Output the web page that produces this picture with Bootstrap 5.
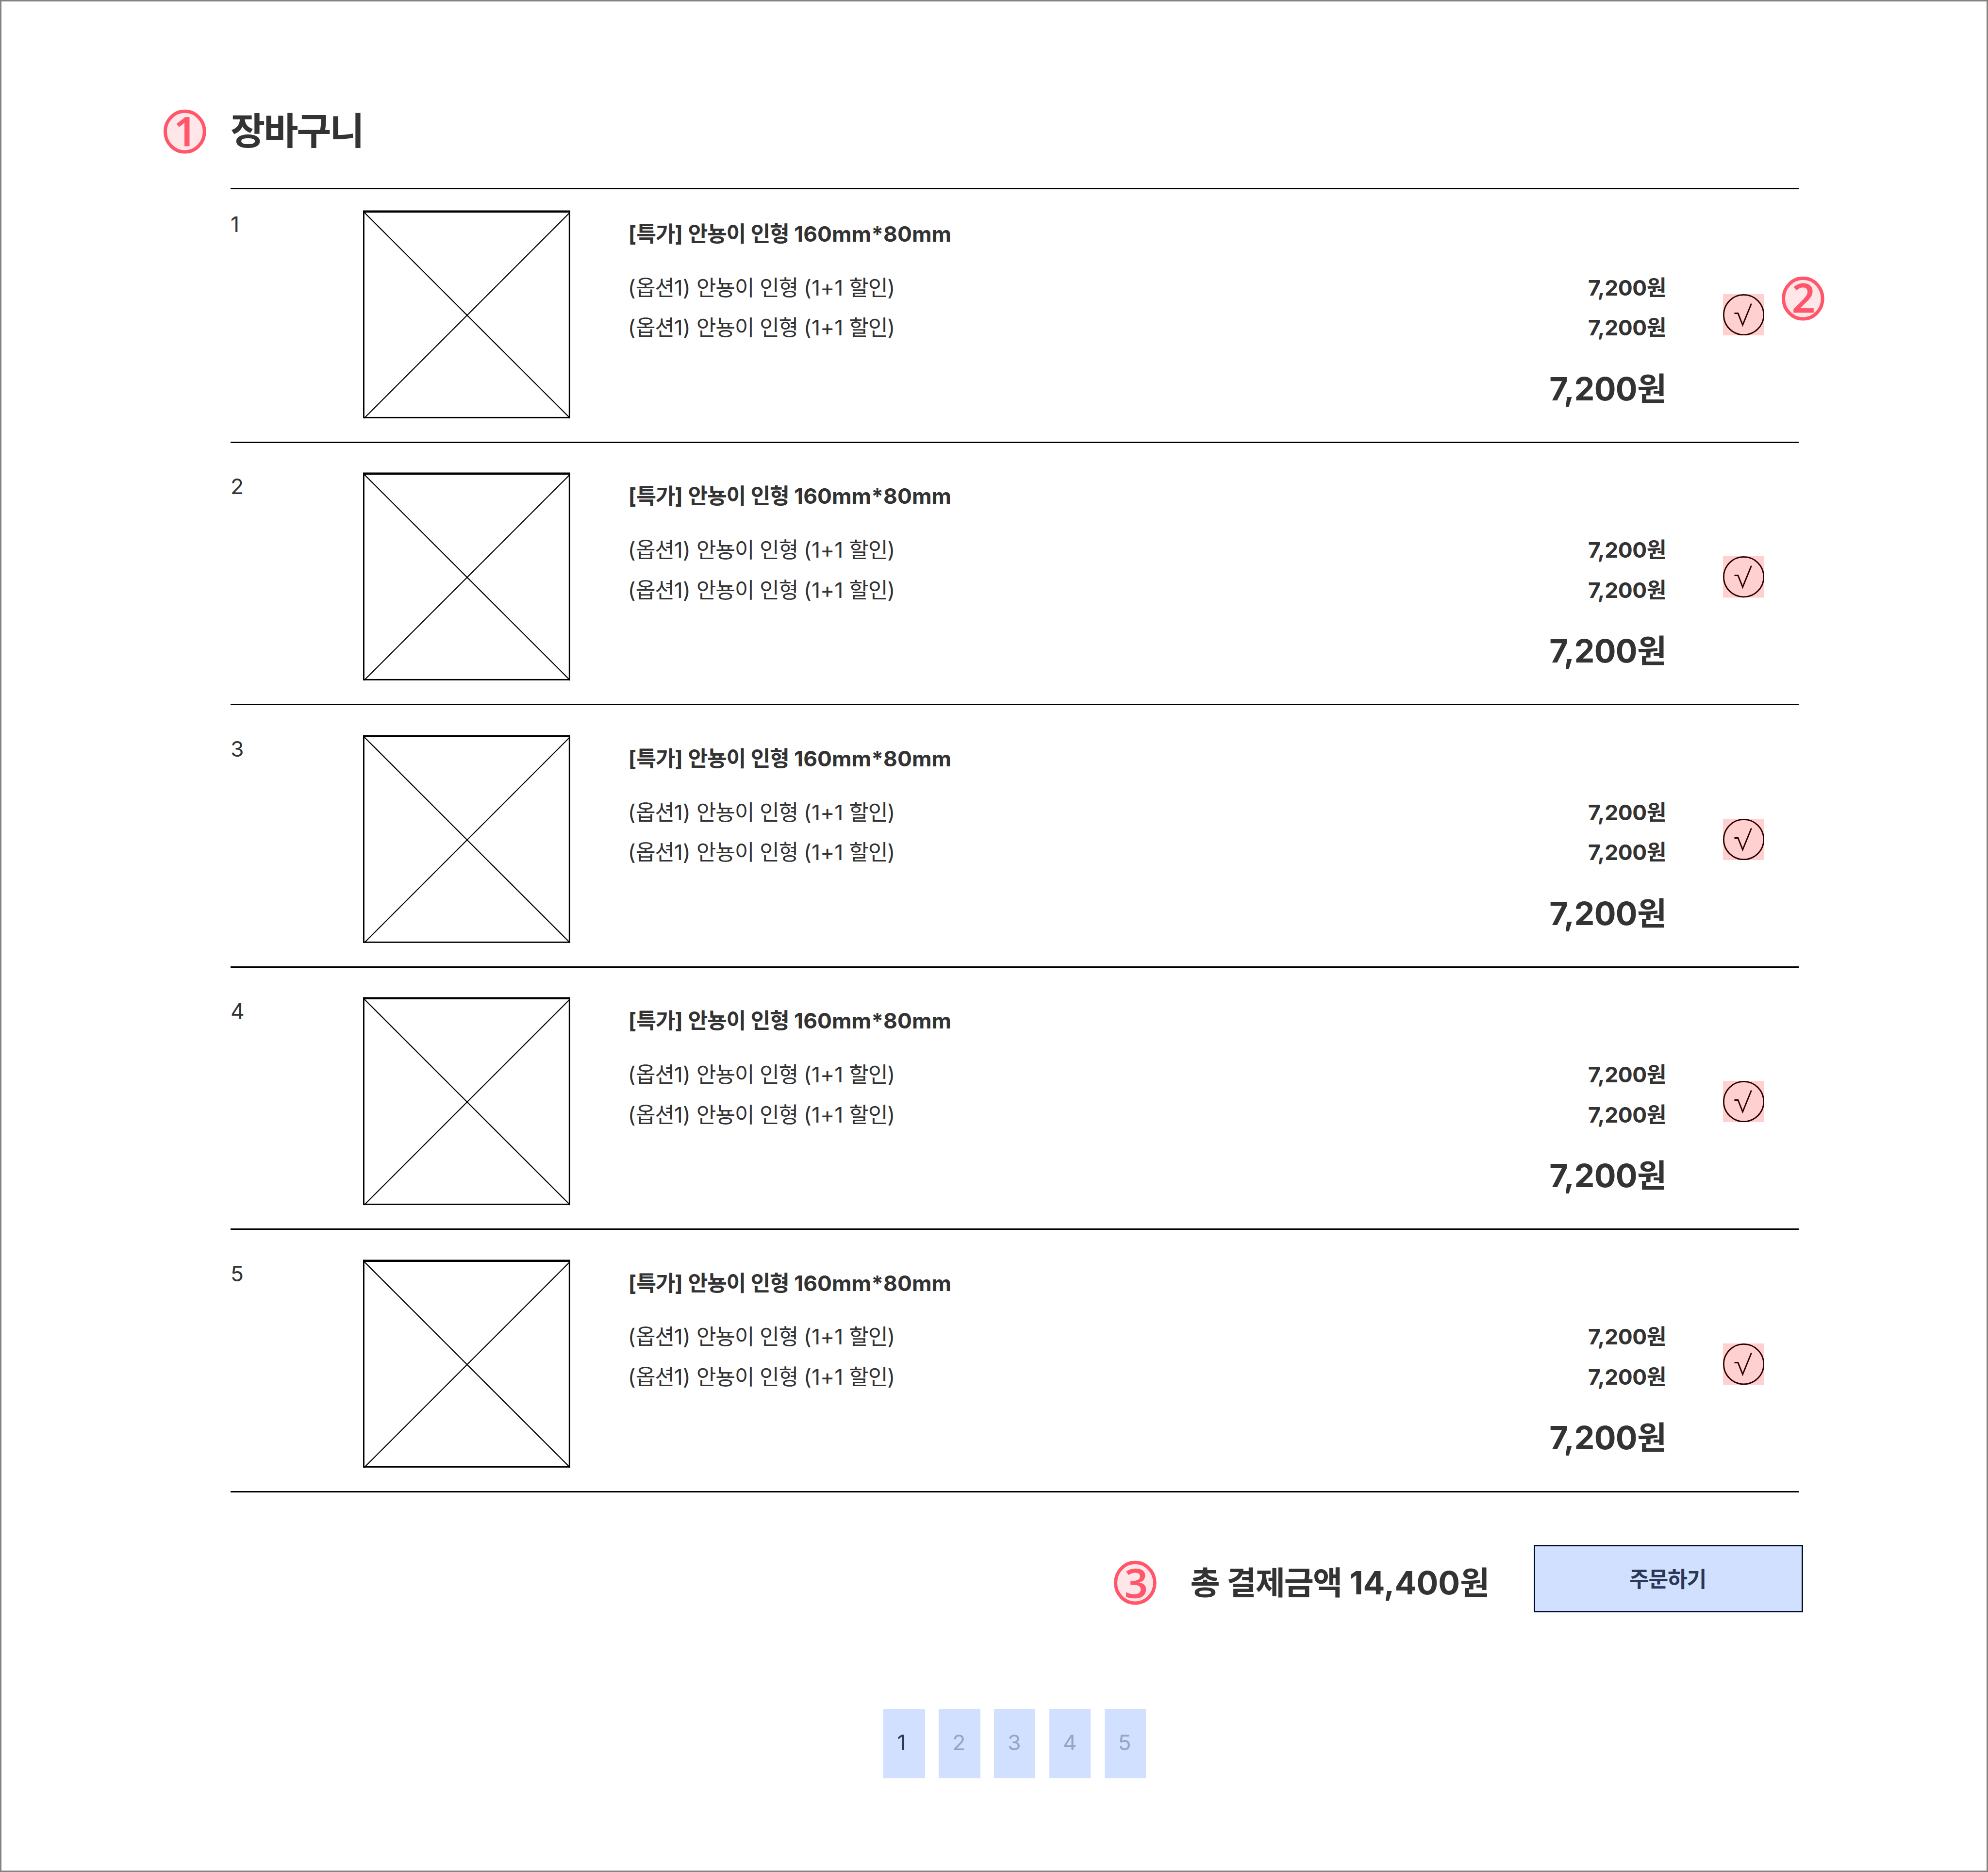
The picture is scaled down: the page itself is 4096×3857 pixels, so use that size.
<!DOCTYPE html>
<html lang="ko">
<head>
<meta charset="utf-8">
<meta name="viewport" content="width=device-width, initial-scale=1">
<title>장바구니</title>
<link href="https://cdn.jsdelivr.net/npm/bootstrap@5.3.0/dist/css/bootstrap.min.css" rel="stylesheet">
<style>
  html { font-size: 71.1111px; }
  body {
    margin: 0; background: #fff; color: #333; overflow: hidden;
    font-family: "Inter", "Noto Sans CJK KR", sans-serif;
    font-size: .624rem; line-height: .8rem;
  }
  .sheet { width: 57.6rem; height: 3857px; border: 3px solid #848280; }
  /* the 3px frame is taken off the paddings */
  .sheet-in { padding: calc(3.113rem - 3px) calc(5.48rem - 3px) 0 calc(6.68rem - 3px); }
  .ko { letter-spacing: -.03em; }
  .num { letter-spacing: -.01em; }
  .dim { letter-spacing: .002em; }
  .note-mark { display: block; width: 1.233rem; height: 1.27rem; flex: none; overflow: visible; }
  .note-mark ellipse { fill: #ffe6e9; stroke: #ff566a; stroke-width: 9.8; }
  .note-mark text { font: 600 118px "Open Sans", sans-serif; fill: #ff566a; stroke: #ff566a; stroke-width: 1; }

  .cart-head { margin-left: -1.936rem; gap: .703rem; padding-bottom: .927rem; }
  .cart-head .note-mark { margin-top: .07rem; }
  .cart-head h1 { font-size: 1.09rem; line-height: 1.4rem; }
  .cart-head .ko { letter-spacing: -.041em; }

  .cart-list { border-top: 3px solid #000; }
  .cart-item { height: 7.6rem; padding-top: .88rem; border-bottom: 3px solid #000; }
  .cart-item:first-child { height: calc(7.4rem - 3px); padding-top: calc(.68rem - 3px); }
  .item-no { width: 3.84rem; flex: none; margin-top: -.02rem; }
  .thumb { width: 6rem; height: 6.04rem; margin-top: -.03rem; flex: none; display: block; }
  .item-text { padding: .262rem 0 0 1.67rem; }
  .item-text .item-name { padding-left: .015rem; margin-bottom: .76rem; }
  .item-text .opt { margin-bottom: .36rem; word-spacing: -.015em; }
  .item-cost { padding-top: 1.822rem; margin-right: 1.655rem; }
  .item-cost .unit { margin-bottom: .36rem; }
  .item-cost .sum { font-size: .935rem; line-height: 1.2rem; margin-top: .767rem; }
  .pick { width: 1.2rem; height: 1.2rem; margin: 2.4rem 1rem 0 0; flex: none; }
  .pick > svg { display: block; width: 100%; height: 100%; }
  .pick .note-mark { position: absolute; left: 1.708rem; top: -.5rem; width: 1.233rem; height: 1.27rem; }

  .cart-foot { margin: 1.52rem -.12rem 0 0; padding-left: 25.587rem; }
  .cart-foot .note-mark { margin-top: .46rem; }
  .total { font-size: .935rem; line-height: 1.2rem; margin: .505rem 0 0 .99rem; }
  .btn-order {
    --bs-btn-bg: #d1e0ff; --bs-btn-color: #2a3856; --bs-btn-border-color: #000f2d;
    --bs-btn-hover-bg: #c2d5ff; --bs-btn-hover-color: #2a3856; --bs-btn-hover-border-color: #000f2d;
    width: 7.8rem; height: 1.96rem; border-width: 3px; border-radius: 0;
    font-size: .624rem; line-height: .8rem; padding: .066rem .04rem 0 0;
  }
  .pages { gap: .4rem; margin-top: 2.8rem; }
  .pages .page-item .page-link {
    width: 1.2rem; height: 2rem; margin: 0; border: 0; border-radius: 0; background: #d1e0ff; color: #96a5c4;
    font-size: .624rem; line-height: .8rem; padding: 0 0 .054rem .395rem; display: flex; align-items: center;
  }
  .pages .page-item.active .page-link { color: #2a3856; }
</style>
</head>
<body>
<main class="sheet">
  <div class="sheet-in">
    <header class="cart-head d-flex align-items-start">
      <svg class="note-mark" viewBox="0 0 123.3 127"><ellipse cx="61.65" cy="63.5" rx="56.8" ry="58.8"/><text x="29.5" y="105">1</text></svg>
      <h1 class="fw-bold mb-0"><span class="ko">장바구니</span></h1>
    </header>

    <section class="cart-list" id="cartList"></section>

    <div class="cart-foot d-flex align-items-start">
      <svg class="note-mark" viewBox="0 0 123.3 127"><ellipse cx="61.65" cy="63.5" rx="56.8" ry="58.8"/><text x="31" y="106.5">3</text></svg>
      <div class="total fw-bold text-nowrap"><span class="ko">총</span> <span class="ko">결제금액</span> 14,400<span class="ko">원</span></div>
      <button type="button" class="btn btn-order fw-bold ms-auto"><span class="ko">주문하기</span></button>
    </div>

    <nav>
      <ul class="pages pagination justify-content-center mb-0">
        <li class="page-item active"><a class="page-link" href="#">1</a></li>
        <li class="page-item"><a class="page-link" href="#">2</a></li>
        <li class="page-item"><a class="page-link" href="#">3</a></li>
        <li class="page-item"><a class="page-link" href="#">4</a></li>
        <li class="page-item"><a class="page-link" href="#">5</a></li>
      </ul>
    </nav>
  </div>
</main>

<template id="itemTpl">
  <article class="cart-item d-flex align-items-start">
    <div class="item-no"></div>
    <svg class="thumb" viewBox="0 -3 600 604" fill="none" stroke="#000">
      <path d="M3 3 600 600M600 3 3 600" stroke-width="3"/>
      <rect x="2" y="2" width="596" height="596" stroke-width="4"/>
      <path d="M0 .8H600" stroke-width="6.4"/>
    </svg>
    <div class="item-text text-nowrap">
      <div class="item-name fw-bold">[<span class="ko">특가</span>] <span class="ko">안뇽이</span> <span class="ko">인형</span> <span class="dim">160mm*80mm</span></div>
      <div class="opt">(<span class="ko">옵션</span>1) <span class="ko">안뇽이</span> <span class="ko">인형</span> (1+1 <span class="ko">할인</span>)</div>
      <div class="opt">(<span class="ko">옵션</span>1) <span class="ko">안뇽이</span> <span class="ko">인형</span> (1+1 <span class="ko">할인</span>)</div>
    </div>
    <div class="item-cost ms-auto text-end fw-bold text-nowrap">
      <div class="unit"><span class="num">7,200</span><span class="ko">원</span></div>
      <div class="unit mb-0"><span class="num">7,200</span><span class="ko">원</span></div>
      <div class="sum"><span class="num">7,200</span><span class="ko">원</span></div>
    </div>
    <div class="pick position-relative">
      <svg viewBox="0 0 120 120" fill="none" stroke="#2d0000" stroke-width="4">
        <rect width="120" height="120" fill="#ffd0d0" stroke="none"/>
        <circle cx="60" cy="60" r="58"/>
        <path d="M33 55.5H43.5L57 89.5 82.3 27.5"/>
      </svg>
    </div>
  </article>
</template>
<template id="markTpl">
  <svg class="note-mark" viewBox="0 0 123.3 127"><ellipse cx="61.65" cy="63.5" rx="56.8" ry="58.8"/><text x="29.5" y="104.5">2</text></svg>
</template>
<script src="https://cdn.jsdelivr.net/npm/bootstrap@5.3.0/dist/js/bootstrap.bundle.min.js"></script>
<script>
  const list = document.getElementById('cartList');
  for (let n = 1; n <= 5; n++) {
    const item = document.getElementById('itemTpl').content.cloneNode(true);
    item.querySelector('.item-no').textContent = n;
    // the checkbox note is shown only once, beside the first item
    if (n === 1) item.querySelector('.pick').append(document.getElementById('markTpl').content.cloneNode(true));
    list.append(item);
  }
</script>
</body>
</html>
